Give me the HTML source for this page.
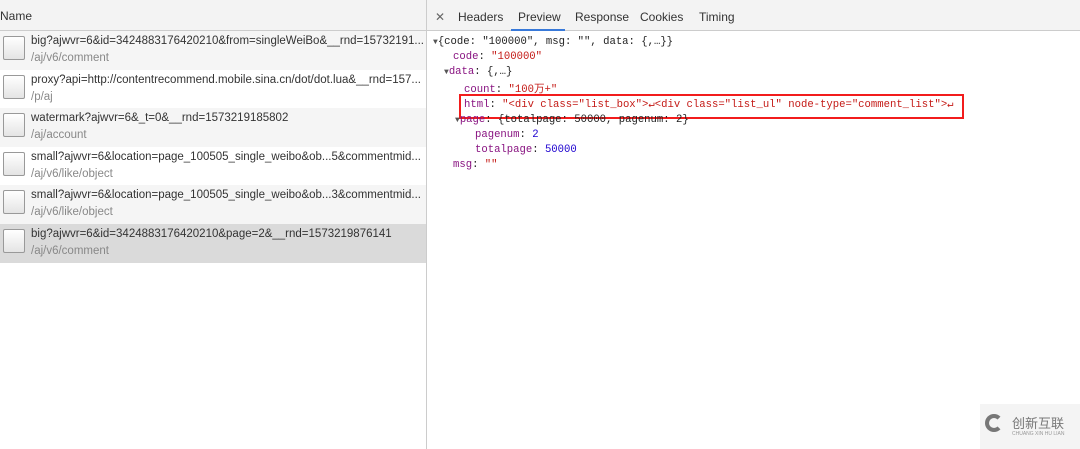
<!DOCTYPE html><html><head><meta charset="utf-8"><style>
body{margin:0;width:1080px;height:449px;background:#fff;font-family:"Liberation Sans","Noto Sans CJK SC",sans-serif;position:relative;overflow:hidden}
.left{position:absolute;left:0;top:0;width:426px;height:449px;border-right:1px solid #ccc}
.hd{height:30px;background:#f3f3f3;border-bottom:1px solid #ccc;font-size:12px;line-height:32px;color:#333;position:relative}
.row{height:38.6px;position:relative;font-size:11.5px;color:#333}
.row.g{background:#f5f5f5}.row.sel{background:#dadada}
.ic{position:absolute;left:3px;top:5px;width:20px;height:22px;border:1px solid #999;border-radius:2px;background:linear-gradient(#fff,#e4e4e4)}
.t1{position:absolute;left:31px;top:4px;white-space:nowrap}
.t2{position:absolute;left:31px;top:21px;color:#888}
.right{position:absolute;left:427px;top:0;right:0;height:449px}
.tabs{height:30px;background:#f3f3f3;border-bottom:1px solid #ccc;font-size:12px;color:#333;position:relative}
.tabs span{position:absolute;top:10px}
.pre{position:absolute;left:84px;top:0;width:54px;height:29px;border-bottom:2px solid #3879d9}
.j{position:absolute;font-family:"Liberation Mono","Noto Sans CJK SC",monospace;font-size:10.6px;white-space:nowrap;color:#222}
.k{color:#881280}.s{color:#c41a16}.n{color:#1c00cf}
.tri{font-size:8px;color:#555}
</style></head><body>
<div class="left">
<div class="hd">Name</div>
<div class="row g"><div class="ic"></div><div class="t1">big?ajwvr=6&amp;id=3424883176420210&amp;from=singleWeiBo&amp;__rnd=15732191...</div><div class="t2">/aj/v6/comment</div></div>
<div class="row"><div class="ic"></div><div class="t1">proxy?api=http://contentrecommend.mobile.sina.cn/dot/dot.lua&amp;__rnd=157...</div><div class="t2">/p/aj</div></div>
<div class="row g"><div class="ic"></div><div class="t1">watermark?ajwvr=6&amp;_t=0&amp;__rnd=1573219185802</div><div class="t2">/aj/account</div></div>
<div class="row"><div class="ic"></div><div class="t1">small?ajwvr=6&amp;location=page_100505_single_weibo&amp;ob...5&amp;commentmid...</div><div class="t2">/aj/v6/like/object</div></div>
<div class="row g"><div class="ic"></div><div class="t1">small?ajwvr=6&amp;location=page_100505_single_weibo&amp;ob...3&amp;commentmid...</div><div class="t2">/aj/v6/like/object</div></div>
<div class="row sel"><div class="ic"></div><div class="t1">big?ajwvr=6&amp;id=3424883176420210&amp;page=2&amp;__rnd=1573219876141</div><div class="t2">/aj/v6/comment</div></div>
</div>
<div class="right">
<div class="tabs"><span style="left:8px;color:#666">✕</span><span style="left:31px">Headers</span><span style="left:91px">Preview</span><span style="left:148px">Response</span><span style="left:213px">Cookies</span><span style="left:272px">Timing</span><div class="pre"></div></div>
</div>
<div class="j" style="left:433px;top:36px"><span class="tri">▼</span>{code: "100000", msg: "", data: {,…}}</div>
<div class="j" style="left:453px;top:51px"><span class="k">code</span>: <span class="s">"100000"</span></div>
<div class="j" style="left:444px;top:66px"><span class="tri">▼</span><span class="k">data</span>: {,…}</div>
<div class="j" style="left:464px;top:81px"><span class="k">count</span>: <span class="s">"100万+"</span></div>
<div class="j" style="left:464px;top:98px"><span class="k">html</span>: <span class="s">"&lt;div class="list_box"&gt;↵&lt;div class="list_ul" node-type="comment_list"&gt;↵</span></div>
<div style="position:absolute;left:459px;top:94px;width:501px;height:21px;border:2px solid #f21c1c"></div>
<div class="j" style="left:455px;top:114px"><span class="tri">▼</span><span class="k">page</span>: {totalpage: 50000, pagenum: 2}</div>
<div class="j" style="left:475px;top:129px"><span class="k">pagenum</span>: <span class="n">2</span></div>
<div class="j" style="left:475px;top:144px"><span class="k">totalpage</span>: <span class="n">50000</span></div>
<div class="j" style="left:453px;top:159px"><span class="k">msg</span>: <span class="s">""</span></div>
<div style="position:absolute;left:980px;top:404px;width:100px;height:45px;background:#f4f4f4"></div>
<div style="position:absolute;left:985px;top:414px;width:18px;height:18px;border:4px solid #777;border-radius:50%;border-right-color:transparent;box-sizing:border-box"></div>
<div style="position:absolute;left:1012px;top:413px;font-size:13px;color:#777">创新互联</div>
<div style="position:absolute;left:1012px;top:431px;font-size:5px;color:#999">CHUANG XIN HU LIAN</div>
</body></html>
